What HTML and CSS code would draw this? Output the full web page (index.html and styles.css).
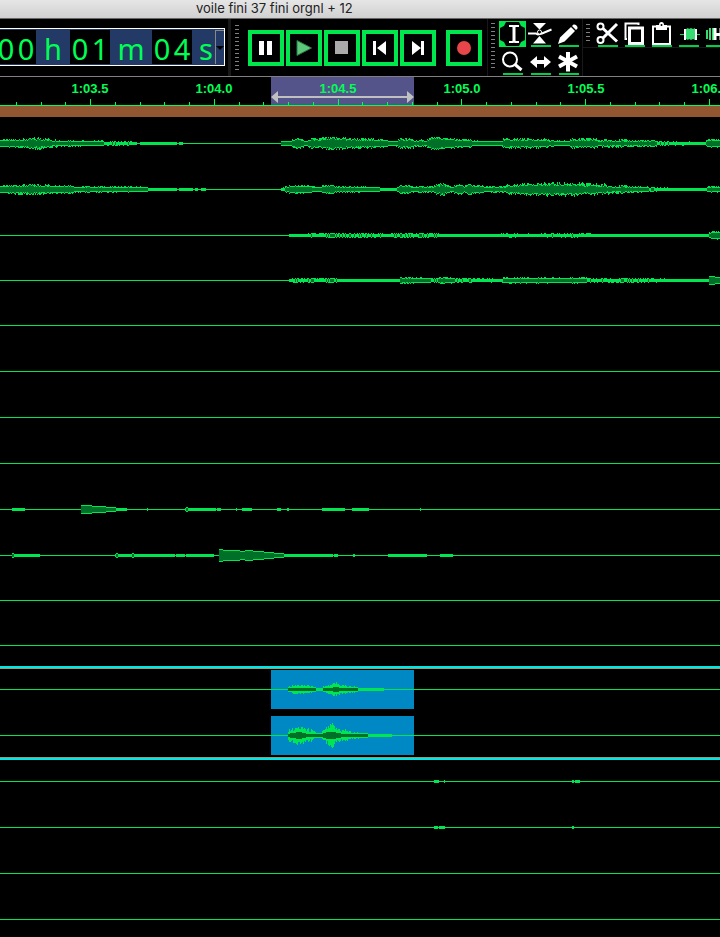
FILE: index.html
```html
<!DOCTYPE html>
<html lang="fr">
<head>
  <meta charset="UTF-8">
  <meta name="viewport" content="width=device-width, initial-scale=1.0">
  <title>voile fini 37 fini orgnl + 12</title>
  <link rel="stylesheet" href="styles.css">
</head>
<body>

  <header class="title-bar">
    <h1>voile fini 37 fini orgnl + 12</h1>
  </header>

  <!-- Toolbars -->
  <div class="toolbars">
    <section class="time-bar">
      <div class="time">
        <span class="digit">0</span><span class="digit">0</span><span class="unit hours">h</span><span class="digit">0</span><span class="digit">1</span><span class="unit minutes">m</span><span class="digit">0</span><span class="digit">4</span><span class="unit seconds">s</span>
        <button class="time-menu" aria-label="Time format"></button>
      </div>
    </section>

    <section class="transport">
      <div class="grip"></div>
      <button class="big-button" aria-label="Pause"><svg viewBox="0 0 28 28"><path fill="#fff" d="M7 7h5v14H7zM15 7h5v14h-5z"/></svg></button>
      <button class="big-button" aria-label="Play"><svg viewBox="0 0 28 28"><path fill="#5cc879" stroke="#2c7a4c" d="M7 6.500v15L21.500 14z"/></svg></button>
      <button class="big-button" aria-label="Stop"><svg viewBox="0 0 28 28"><path fill="#aaa" d="M7 7h13v13H7z"/></svg></button>
      <button class="big-button" aria-label="Skip to start"><svg viewBox="0 0 28 28"><path fill="#fff" d="M7 7h3v14H7zM20 7v14l-9-7z"/></svg></button>
      <button class="big-button" aria-label="Skip to end"><svg viewBox="0 0 28 28"><path fill="#fff" d="M17 7h3v14h-3zM8 7v14l9-7z"/></svg></button>
      <button class="big-button record" aria-label="Record"><svg viewBox="0 0 28 28"><circle cx="14" cy="14" r="7" fill="#e8464a"/></svg></button>
    </section>

    <section class="tools">
      <div class="grip"></div>
      <div class="tool-grid">
        <button class="tool selected" aria-label="Selection"><svg viewBox="0 0 28 28"><path fill="#00e64d" d="M1 1h27v26H1z"/><path fill="#000" d="M8 2h13l2 4 4 2v12l-4 2-2 4H8l-2-4-4-2V8l4-2z"/><path fill="none" stroke="#fff" stroke-width="2" d="M11 6h4l1 1 1-1h4M11 22h4l1-1 1 1h4"/><path stroke="#fff" stroke-width="3" d="M16 6v16"/></svg></button>
        <button class="tool" aria-label="Envelope"><svg viewBox="0 0 28 28"><path fill="#fff" d="M7 3h13l-6.500 6.500zM7 23.500h13L13.500 16z"/><path fill="none" stroke="#fff" stroke-width="2" d="M2 13.500h8l2 1 4-1 9.500-4"/><circle cx="13.500" cy="12" r="2" fill="#000" stroke="#fff"/></svg></button>
        <button class="tool" aria-label="Draw"><svg viewBox="0 0 28 28"><path fill="#fff" d="M4 24l2-6.500L17 7l4 4-10.500 10.500zM18 6l1.500-1.500q1.500-.5 3 1t1 3L22 10z"/></svg></button>
        <button class="tool" aria-label="Zoom"><svg viewBox="0 0 28 28"><circle cx="12" cy="11.500" r="7" fill="none" stroke="#fff" stroke-width="2"/><path stroke="#fff" stroke-width="3" d="M16.500 16l7 6"/></svg></button>
        <button class="tool" aria-label="Time shift"><svg viewBox="0 0 28 28"><path fill="#fff" d="M4 14l7-6v4h7V8l7 6-7 6v-4h-7v4z"/></svg></button>
        <button class="tool" aria-label="Multi-tool"><svg viewBox="0 0 28 28"><path fill="none" stroke="#fff" stroke-width="4" d="M14 4v19.500M5 8.500l18 10M23 8.500l-18 10"/></svg></button>
      </div>
    </section>

    <section class="edit">
      <div class="edit-row">
        <div class="grip"></div>
        <button class="tool" aria-label="Cut"><svg viewBox="0 0 28 28"><g fill="none" stroke="#fff"><circle cx="7.500" cy="6.500" r="3" stroke-width="2"/><circle cx="7.500" cy="20" r="3" stroke-width="2"/><path stroke-width="3" d="M10 8.500l14 13M10 18L24 4"/></g></svg></button>
        <button class="tool" aria-label="Copy"><svg viewBox="0 0 28 28"><g fill="none" stroke="#fff"><path stroke-width="2" d="M7 19H5.500V3.500h13V5"/><path stroke-width="3" d="M9.500 8h13v15.500h-13z"/></g></svg></button>
        <button class="tool" aria-label="Paste"><svg viewBox="0 0 28 28"><path fill="none" stroke="#fff" stroke-width="2" d="M6 6.500h17V24H6z"/><path fill="#fff" d="M9 5h3q0-3 2.500-3T17 5h3v5H9z"/><circle cx="14.500" cy="5" r="1"/></svg></button>
        <button class="tool" aria-label="Trim"><svg viewBox="0 0 28 28"><path stroke="#00e64d" d="M6 14.500h20"/><path stroke="#fff" stroke-width="2" d="M11 9v11M22 9v11"/><path fill="#35dc70" d="M12 9l2-1 1 1 2-1 2 1 2-1v12l-2-1-2 1-2-1-1 1-2-1z"/></svg></button>
        <button class="tool" aria-label="Silence"><svg viewBox="0 0 28 28"><path fill="none" stroke="#35dc70" stroke-width="2" d="M6 10v9M9 8v12M12 8v12"/><path fill="none" stroke="#fff" stroke-width="3" d="M14 8v12M14 14.500h7M20 8v12"/></svg></button>
      </div>
    </section>
  </div>

  <!-- Timeline -->
  <div class="ruler">
    <div class="selection">
      <svg viewBox="0 0 143 14"><path stroke="#c0c0c0" stroke-width="2" d="M6 7h131"/><path fill="#c0c0c0" d="M0 7l7-6v12zM143 7l-7-6v12z"/></svg>
    </div>
    <div class="labels">
      <span>1:03.5</span><span>1:04.0</span><span>1:04.5</span><span>1:05.0</span><span>1:05.5</span><span>1:06.0</span>
    </div>
    <svg class="ticks" id="ticks"></svg>
  </div>
  <div class="scrub"></div>

  <main class="tracks">
    <svg class="track" data-wave="a"></svg>
    <svg class="track" data-wave="b"></svg>
    <svg class="track short" data-wave="c"></svg>
    <svg class="track short" data-wave="d"></svg>
    <svg class="track"></svg>
    <svg class="track"></svg>
    <svg class="track"></svg>
    <svg class="track"></svg>
    <svg class="track" data-wave="e"></svg>
    <svg class="track short" data-wave="f"></svg>
    <svg class="track short"></svg>
    <svg class="track last"></svg>
    <div class="focused">
      <svg class="track" data-wave="g" data-clip="1"></svg>
      <svg class="track last" data-wave="h" data-clip="1"></svg>
    </div>
    <svg class="track" data-wave="i"></svg>
    <svg class="track" data-wave="j"></svg>
    <svg class="track"></svg>
    <svg class="track"></svg>
  </main>

  <script src="script.js"></script>
</body>
</html>
```
FILE: styles.css
```css
* {
  margin: 0;
  padding: 0;
  box-sizing: border-box;
}

body {
  background-color: #000;
  font-family: "Liberation Sans", Arial, sans-serif;
  overflow: hidden;
}

button {
  background: none;
  border: none;
}

svg {
  display: block;
}

/* Title */
.title-bar {
  height: 19px;
  padding-left: 196px;
  background: linear-gradient(#e6e6e6, #d0d0d0);
  border-bottom: 1px solid #666;
}

.title-bar h1 {
  font-family: Inter, sans-serif;
  font-size: 13px;
  line-height: 17px;
  font-weight: 400;
  color: #222;
  white-space: nowrap;
}

/* Toolbars */
.toolbars {
  display: flex;
  height: 58px;
  border-bottom: 1px solid #808080;
  overflow: hidden;
}

.time-bar {
  width: 231px;
  flex: none;
  padding-top: 9px;
  border-right: 3px solid #181818;
}

.time {
  display: flex;
  width: 230px;
  height: 38px;
  margin-left: -5px;
  border: 1px solid #fff;
  padding: 1px 0;
  background-color: #233a66;
  color: #00ff55;
  font-family: "Noto Sans", sans-serif;
  font-size: 29px;
  line-height: 38px;
}

.digit,
.unit {
  flex: none;
  height: 34px;
  text-align: center;
}

.digit {
  width: 20px;
  background-color: #000;
}

.hours {
  width: 34px;
}

.minutes {
  width: 42px;
}

.seconds {
  width: 23px;
  text-align: right;
  padding-right: 2px;
}

.time-menu {
  width: 9px;
  border-left: 1px solid #888;
  border-top: 1px solid #888;
}

.time-menu::after {
  content: "";
  display: block;
  border: 4px solid transparent;
  border-top-color: #000;
  border-bottom: none;
}

.grip {
  flex: none;
  width: 4px;
  height: 46px;
  background: repeating-linear-gradient(#808080 0 1px, transparent 1px 4px);
}

.transport {
  display: flex;
  align-items: center;
  flex: none;
  gap: 2px;
  width: 257px;
  padding-left: 4px;
  border-right: 1px solid #181818;
}

.transport .grip {
  margin-right: 7px;
}

.big-button {
  width: 36px;
  height: 36px;
  border: 4px solid #00e64d;
}

.big-button.record {
  margin-left: 8px;
}

.tools {
  display: flex;
  flex: none;
  gap: 3px;
  width: 95px;
  padding-left: 3px;
  border-right: 1px solid #181818;
}

.tools .grip,
.edit .grip {
  margin-top: 4px;
}

.tool-grid {
  display: grid;
  grid-template-columns: repeat(3, 28px);
  grid-template-rows: repeat(2, 28px);
  padding-top: 1px;
}

.tool {
  flex: none;
  width: 28px;
  height: 28px;
  background: linear-gradient(#00d048, #00d048) 5px 25px / 20px 2px no-repeat;
}

.tool svg {
  width: 28px;
  height: 28px;
}

.edit {
  flex: 1;
  min-width: 0;
}

.edit-row {
  display: flex;
  height: 29px;
  padding: 1px 0 0 3px;
  border-bottom: 1px solid #181818;
}

.edit .grip {
  height: 18px;
  margin-right: 3px;
}

.edit .tool {
  width: 27px;
}

/* Timeline */
.ruler {
  position: relative;
  height: 29px;
  border-bottom: 1px solid #00ff55;
  overflow: hidden;
}

.selection {
  position: absolute;
  left: 271px;
  top: 0;
  width: 143px;
  height: 28px;
  padding-top: 13px;
  background-color: #54548a;
}

.labels {
  position: relative;
  display: flex;
  height: 22px;
  padding-left: 28px;
}

.labels span {
  flex: none;
  width: 124px;
  text-align: center;
  color: #00ff55;
  font-size: 13px;
  line-height: 24px;
  font-weight: 700;
}

.ticks {
  position: relative;
  width: 100%;
  height: 6px;
}

.scrub {
  height: 11px;
  background-color: #925730;
}

/* Tracks */
.tracks {
  padding-top: 7px;
}

.track {
  width: 100%;
  height: 46px;
  shape-rendering: crispEdges;
}

.track.short {
  height: 45px;
}

.track.last {
  height: 40px;
}

.focused {
  border-top: 2px solid #00e6e6;
  border-bottom: 2px solid #00e6e6;
  box-shadow: inset 0 1px #9c9c68, inset 0 -1px #9c9c68;
  padding: 2px 0;
  margin-bottom: 2px;
}
```
FILE: script.js
```js
const NS = 'http://www.w3.org/2000/svg';
const MID = 19;

// Keyframes: [x, level, extra peak height]
const waves = {
  a: [[0, 3, 0], [18, 3, 1], [40, 3, 3], [62, 2, 1], [90, 2, 0], [117, 1, 1], [135, 1, 0], [137, 0, 0], [143, 1, 0], [176, 1, 0], [177, 0, 0], [181, 1, 0], [183, 0, 0],
      [280, 0, 0], [281, 2, 0], [291, 2, 0], [293, 3, 1], [299, 4, 1], [305, 2, 0], [312, 3, 2], [330, 4, 2], [360, 3, 2], [380, 3, 1],
      [394, 2, 0], [401, 3, 2], [425, 2, 1], [432, 5, 1], [446, 4, 1], [462, 3, 1], [480, 2, 0], [501, 2, 0],
      [504, 3, 2], [530, 3, 2], [567, 2, 0], [572, 3, 2], [590, 3, 2], [604, 2, 2], [640, 2, 1], [672, 1, 1], [690, 1, 0], [705, 1, 0], [707, 3, 1], [720, 3, 1]],
  b: [[0, 3, 0], [18, 3, 2], [40, 3, 2], [60, 3, 1], [85, 2, 1], [147, 2, 0], [148, 1, 0], [176, 1, 0], [177, 0, 0], [180, 1, 0], [192, 1, 0], [193, 0, 0], [196, 1, 0], [199, 0, 0], [203, 1, 0], [208, 0, 0],
      [280, 0, 0], [282, 1, 1], [291, 3, 0], [303, 3, 1], [317, 2, 0], [327, 3, 1], [340, 2, 1], [370, 2, 0],
      [388, 1, 0], [396, 1, 0], [399, 3, 1], [420, 2, 1], [432, 2, 1], [442, 4, 2], [452, 2, 1], [460, 4, 1], [464, 2, 0], [468, 4, 1], [475, 3, 1],
      [490, 2, 1], [502, 2, 1], [512, 3, 2], [530, 4, 2], [575, 4, 3], [590, 3, 3], [620, 2, 2], [645, 2, 0], [650, 1, 1], [670, 1, 0], [706, 1, 0], [708, 2, 1], [720, 2, 1]],
  c: [[288, 0, 0], [289, 1, 0], [300, 1, 0], [336, 1, 1], [340, 1, 1], [365, 1, 1], [387, 1, 0], [400, 1, 1], [428, 1, 1], [440, 1, 0],
      [500, 1, 0], [510, 1, 1], [523, 1, 0], [570, 1, 1], [594, 1, 0], [708, 1, 0], [709, 2, 1], [714, 3, 1], [720, 3, 1]],
  d: [[288, 0, 0], [289, 1, 0], [296, 1, 1], [330, 1, 1], [347, 1, 0], [399, 1, 0], [400, 2, 1], [428, 2, 0], [432, 1, 1], [446, 2, 1],
      [460, 1, 1], [501, 1, 0], [504, 2, 1], [565, 2, 0], [572, 2, 1], [600, 1, 1], [630, 1, 1], [668, 1, 0], [708, 1, 0], [709, 4, 0], [720, 3, 0]],
  e: [[11, 0, 0], [12, 1, 0], [24, 1, 0], [25, 0, 0], [80, 0, 0], [81, 4, 0], [91, 4, 0], [92, 3, 0], [105, 3, 0], [106, 2, 0], [115, 2, 0], [116, 1, 0], [126, 1, 0], [127, 0, 0],
      [146, 0, 0], [147, 1, 0], [148, 0, 0], [184, 0, 0], [186, 2, 0], [189, 1, 0], [215, 1, 0], [216, 0, 0], [217, 1, 0], [220, 1, 0], [221, 0, 0],
      [235, 0, 0], [236, 1, 0], [237, 0, 0], [241, 0, 0], [242, 1, 0], [251, 1, 0], [252, 0, 0], [276, 0, 0], [277, 1, 0], [280, 1, 0], [281, 0, 0], [286, 0, 0], [287, 1, 0], [289, 0, 0],
      [321, 0, 0], [322, 1, 0], [344, 1, 0], [345, 0, 0], [351, 0, 0], [352, 1, 0], [368, 1, 0], [369, 0, 0], [419, 0, 0], [420, 1, 0], [421, 0, 0]],
  f: [[11, 0, 0], [12, 2, 0], [14, 1, 0], [39, 1, 0], [40, 0, 0], [114, 0, 0], [116, 2, 0], [118, 1, 0], [131, 1, 0], [132, 2, 0], [134, 1, 0], [174, 1, 0], [175, 0, 0],
      [177, 1, 0], [184, 1, 0], [185, 0, 0], [187, 1, 0], [213, 1, 0], [214, 0, 0], [218, 0, 0], [219, 6, 0], [225, 5, 0], [238, 5, 0], [240, 4, 0], [250, 5, 0], [254, 4, 0],
      [263, 4, 0], [264, 3, 0], [273, 3, 0], [274, 2, 0], [283, 2, 0], [284, 1, 0], [332, 1, 0], [333, 0, 0], [335, 1, 0], [337, 1, 0], [338, 0, 0],
      [352, 0, 0], [353, 1, 0], [355, 0, 0], [387, 0, 0], [388, 1, 0], [426, 1, 0], [427, 0, 0], [439, 0, 0], [440, 1, 0], [451, 1, 0], [453, 0, 0]],
  g: [[287, 0, 0], [288, 2, 0], [296, 3, 1], [305, 3, 1], [314, 2, 0], [316, 1, 0], [322, 1, 0], [323, 2, 1], [330, 3, 1], [335, 4, 3], [342, 3, 1], [350, 2, 1], [357, 2, 0], [358, 1, 0], [379, 1, 0], [388, 0, 0]],
  h: [[287, 0, 0], [288, 3, 2], [292, 4, 3], [299, 5, 4], [308, 3, 4], [315, 2, 1], [321, 2, 0], [323, 4, 1], [328, 5, 4], [332, 7, 5], [336, 4, 3], [344, 3, 3], [350, 2, 2], [360, 2, 0], [366, 2, 0], [368, 1, 0], [388, 1, 0], [394, 0, 0]],
  i: [[433, 0, 0], [434, 1, 0], [438, 1, 0], [439, 0, 0], [443, 0, 0], [444, 1, 0], [445, 0, 0], [571, 0, 0], [572, 1, 0], [574, 0, 0], [576, 1, 0], [579, 1, 0], [580, 0, 0]],
  j: [[433, 0, 0], [434, 1, 0], [437, 1, 0], [438, 0, 0], [440, 1, 0], [444, 1, 0], [445, 0, 0], [571, 0, 0], [572, 1, 0], [573, 1, 0], [574, 0, 0]]
};

function add(svg, tag, attrs) {
  const el = document.createElementNS(NS, tag);
  for (const key in attrs) {
    el.setAttribute(key, attrs[key]);
  }
  svg.appendChild(el);
}

// Repeatable noise between 0 and 1
function noise(n) {
  const v = Math.sin(n * 12.9898) * 43758.5453;
  return v - Math.floor(v);
}

function drawWave(svg, points, inClip) {
  let edge = '';
  let body = '';
  for (let k = 0; k < points.length - 1; k++) {
    const [x0, l0, j0] = points[k];
    const [x1, l1, j1] = points[k + 1];
    for (let x = x0; x < x1; x++) {
      const t = (x - x0) / (x1 - x0);
      const level = Math.round(l0 + (l1 - l0) * t);
      const jitter = j0 + (j1 - j0) * t;
      if (level < 1) continue;
      const up = level + Math.floor(noise(x + 7) * (jitter + 1));
      const down = level + Math.floor(noise(x + 300) * (jitter + 0.8));
      edge += `M${x} ${MID - up}h1v${up + down + 1}h-1z`;
      const inner = inClip ? Math.min(Math.floor(level * 0.6), 3) : Math.min(up, down) - 1;
      if (inner > 0) {
        body += `M${x} ${MID - inner}h1v${inner * 2 + 1}h-1z`;
      }
    }
  }
  add(svg, 'path', { d: edge, fill: '#00e650' });
  add(svg, 'path', { d: body, fill: '#007028' });
}

document.querySelectorAll('.track').forEach(svg => {
  if (svg.dataset.clip) {
    add(svg, 'rect', { x: 271, y: 0, width: 143, height: 39, fill: '#0088c4' });
  }
  add(svg, 'rect', { x: 0, y: MID, width: '100%', height: 1, fill: '#00e650' });
  if (svg.dataset.wave) {
    drawWave(svg, waves[svg.dataset.wave], svg.dataset.clip);
  }
});

// Ruler ticks, five to each label
const ticks = document.getElementById('ticks');
for (let i = -3; i * 24.75 + 90 < window.innerWidth; i++) {
  const major = i % 5 === 0;
  add(ticks, 'rect', { x: Math.round(90 + i * 24.75), y: major ? 0 : 3, width: 1, height: 6, fill: '#00ff55' });
}
```
